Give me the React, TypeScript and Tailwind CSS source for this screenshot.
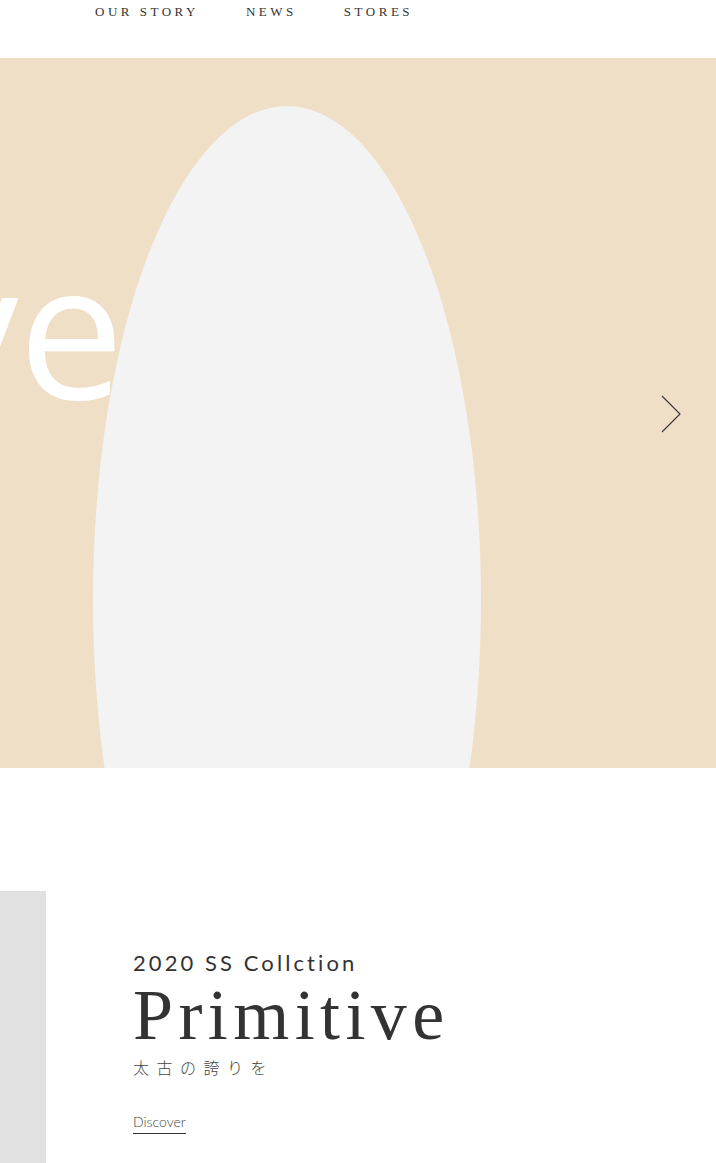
const navItems = ['OUR STORY', 'NEWS', 'STORES']

function NextArrow() {
  return (
    <svg width="24" height="40" viewBox="0 0 24 40" fill="none" aria-hidden>
      <path d="M2 2 L20 20 L2 38" stroke="#3a3a3a" strokeWidth="1.2" />
    </svg>
  )
}

export default function App() {
  return (
    <div className="min-h-[1163px] overflow-hidden bg-white text-[#333]">
      <header className="h-[58px]">
        <nav className="flex gap-[47px] pl-[95px] pt-[4px]">
          {navItems.map((item) => (
            <a
              key={item}
              href="#"
              className="text-[13px] leading-[16px] tracking-[0.27em] text-[#333] [font-family:'Liberation_Serif',serif]"
            >
              {item}
            </a>
          ))}
        </nav>
      </header>

      <section className="relative h-[710px] overflow-hidden bg-[#f0dfc7]">
        <span className="absolute right-[calc(100%-124px)] top-[168px] whitespace-nowrap text-[188px] leading-[200px] text-white [font-family:'Open_Sans',sans-serif]">
          Primitive
        </span>
        <div className="absolute left-[93px] top-[48px] h-[988px] w-[388px] rounded-[50%] bg-[#f3f3f3]" />
        <button className="absolute right-[32px] top-[336px]" aria-label="next">
          <NextArrow />
        </button>
      </section>

      <section className="mt-[123px] flex">
        <div className="h-[300px] w-[46px] shrink-0 bg-[#e1e1e1]" />
        <div className="pl-[87px] pt-[58px]">
          <p className="text-[22px] leading-[28px] tracking-[0.14em] text-[#333] [font-family:Lato,sans-serif]">
            2020 SS Collction
          </p>
          <h1 className="mt-[2px] text-[72px] leading-[72px] tracking-[0.075em] text-[#333] [font-family:'Liberation_Serif',serif]">
            Primitive
          </h1>
          <p className="mt-[6px] text-[16px] leading-[20px] tracking-[0.47em] text-[#444] [font-family:'Noto_Sans_CJK_JP',sans-serif] font-light">
            太古の誇りを
          </p>
          <a
            href="#"
            className="mt-[37px] inline-block border-b border-[#333] pb-[3px] text-[14px] leading-[16px] text-[#444] [font-family:Lato,sans-serif] font-light"
          >
            Discover
          </a>
        </div>
      </section>
    </div>
  )
}
